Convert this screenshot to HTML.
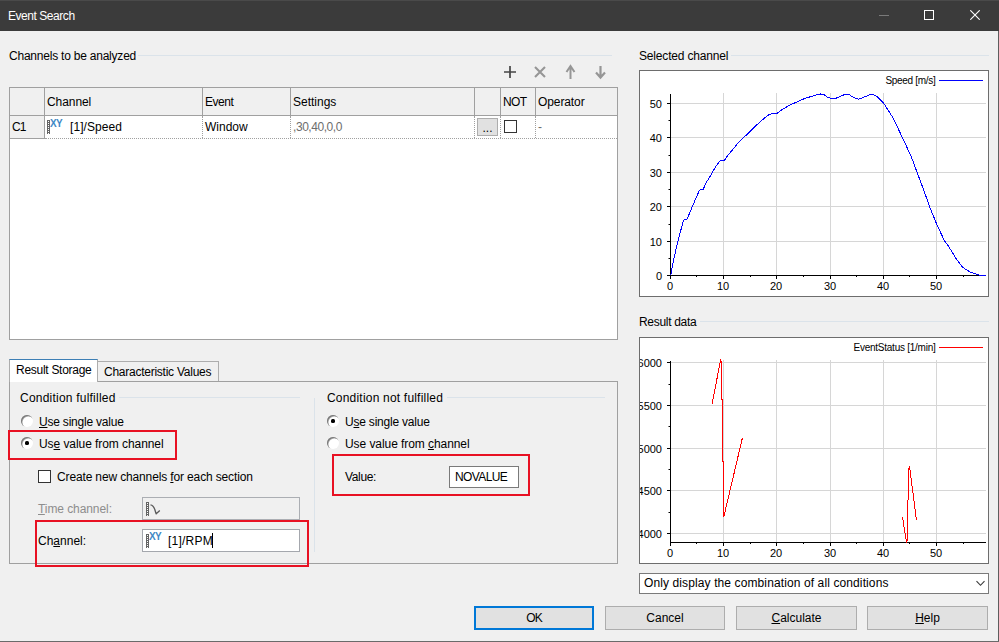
<!DOCTYPE html>
<html><head><meta charset="utf-8">
<style>
*{margin:0;padding:0;box-sizing:border-box}
html,body{width:999px;height:642px;overflow:hidden;background:#f0f0f0;font-family:"Liberation Sans",sans-serif;font-size:12px;color:#000}
.a{position:absolute}
.t{position:absolute;white-space:pre;line-height:14px}
#title{left:0;top:0;width:999px;height:31px;background:#3b3b3b;border-top:1px solid #4a4a4a}
.gl{position:absolute;height:1px;background:#dbe3ea}
.tbl{position:absolute;left:9px;top:87px;width:609px;height:253px;background:#fff;border:1px solid #a0a0a0}
.hd{position:absolute;top:0;height:28px;background:#f0f0f0;border-right:1px solid #a0a0a0;border-bottom:1px solid #a0a0a0}
.vd{position:absolute;width:1px;border-left:1px dotted #a0a0a0}
.btn{position:absolute;background:#e1e1e1;border:1px solid #adadad;text-align:center;line-height:23px}
.red{position:absolute;border:2px solid #e81123}
.rad{position:absolute;width:12px;height:12px;border-radius:50%;background:#fff;box-shadow:inset 1px 1px 0 #7a7a7a,inset 1.5px 1.5px 0 #b8b8b8}
.rad.on::after{content:"";position:absolute;left:4px;top:4px;width:4px;height:4px;border-radius:1.6px;background:#000}
.chk{position:absolute;width:13px;height:13px;border:1px solid #333;background:#fff}
u{text-decoration:underline;text-underline-offset:1px}
.xy{font-size:10px;font-weight:bold;color:#4088c5;letter-spacing:-0.6px;line-height:12px}
</style></head><body>
<div id="title" class="a"></div>
<div class="t" style="left:8px;top:9px;color:#fff;letter-spacing:-0.45px">Event Search</div>
<!-- title controls -->
<div class="a" style="left:879px;top:15px;width:10px;height:1px;background:#7a7a7a"></div>
<div class="a" style="left:924px;top:10px;width:10px;height:10px;border:1px solid #fff"></div>
<svg class="a" style="left:970px;top:10px" width="10" height="10" viewBox="0 0 10 10"><path d="M0.3 0.3L9.7 9.7M9.7 0.3L0.3 9.7" stroke="#fff" stroke-width="1.1"/></svg>
<div class="a" style="left:998px;top:31px;width:1px;height:611px;background:#5e5e5e"></div>
<div class="a" style="left:0;top:641px;width:999px;height:1px;background:#6a6a6a"></div>

<!-- Channels to be analyzed -->
<div class="t" style="left:9px;top:49px;letter-spacing:-0.22px">Channels to be analyzed</div>
<div class="gl" style="left:138px;top:55px;width:474px"></div>
<!-- toolbar -->
<svg class="a" style="left:503px;top:65px" width="14" height="14" viewBox="0 0 14 14"><path d="M7 1V13M1 7H13" stroke="#454545" stroke-width="1.7"/></svg>
<svg class="a" style="left:533px;top:65px" width="14" height="14" viewBox="0 0 14 14"><path d="M2 2L12 12M12 2L2 12" stroke="#969696" stroke-width="2.1"/></svg>
<svg class="a" style="left:564px;top:64px" width="13" height="16" viewBox="0 0 13 16"><path d="M6.5 2V15M2.5 8L6.5 2L10.5 8" stroke="#969696" stroke-width="2" fill="none"/></svg>
<svg class="a" style="left:594px;top:64px" width="13" height="16" viewBox="0 0 13 16"><path d="M6.5 2V14M2 8.5L6.5 13.5L11 8.5" stroke="#969696" stroke-width="2.2" fill="none"/></svg>

<!-- table -->
<div class="tbl">
  <div class="hd" style="left:0;width:35px;height:51px"></div>
  <div class="hd" style="left:35px;width:158px"></div>
  <div class="hd" style="left:193px;width:88px"></div>
  <div class="hd" style="left:281px;width:184px"></div>
  <div class="hd" style="left:465px;width:26px"></div>
  <div class="hd" style="left:491px;width:35px"></div>
  <div class="hd" style="left:526px;width:81px;border-right:none"></div>
  <div class="a" style="left:35px;top:50px;width:572px;border-top:1px dotted #a0a0a0"></div>
  <div class="a" style="left:0;top:27px;width:35px;height:1px;background:#a0a0a0"></div>
  <div class="vd" style="left:192px;top:28px;height:22px"></div>
  <div class="vd" style="left:280px;top:28px;height:22px"></div>
  <div class="vd" style="left:464px;top:28px;height:22px"></div>
  <div class="vd" style="left:490px;top:28px;height:22px"></div>
  <div class="vd" style="left:525px;top:28px;height:22px"></div>
</div>
<div class="t" style="left:47px;top:95px;letter-spacing:-0.07px">Channel</div>
<div class="t" style="left:205px;top:95px;letter-spacing:-0.47px">Event</div>
<div class="t" style="left:293px;top:95px">Settings</div>
<div class="t" style="left:503px;top:95px;letter-spacing:-0.65px">NOT</div>
<div class="t" style="left:538px;top:95px;letter-spacing:-0.1px">Operator</div>
<div class="t" style="left:12px;top:120px;letter-spacing:-0.9px">C1</div>
<svg class="a" style="left:47px;top:120px" width="3" height="14" viewBox="0 0 3 14" shape-rendering="crispEdges"><path d="M0 0H3V14H2V13H1V14H0Z" fill="#646464"/><g fill="#fff"><rect x="1" y="1" width="1" height="1"/><rect x="1" y="3" width="1" height="1"/><rect x="1" y="5" width="1" height="1"/><rect x="1" y="7" width="1" height="1"/><rect x="1" y="9" width="1" height="1"/><rect x="1" y="11" width="1" height="1"/></g></svg>
<div class="t xy" style="left:50px;top:118px">XY</div>
<div class="t" style="left:70px;top:120px;letter-spacing:0.08px">[1]/Speed</div>
<div class="t" style="left:205px;top:120px">Window</div>
<div class="t" style="left:293px;top:120px;color:#6d6d6d;letter-spacing:-0.44px">,30,40,0,0</div>
<div class="btn" style="left:477px;top:118px;width:21px;height:18px;line-height:18px">...</div>
<div class="chk" style="left:504px;top:120px"></div>
<div class="t" style="left:538px;top:120px;color:#6d6d6d">-</div>

<!-- tabs -->
<div class="a" style="left:97px;top:361px;width:122px;height:21px;background:#f0f0f0;border:1px solid #adadad;border-bottom:none"></div>
<div class="t" style="left:104px;top:365px;letter-spacing:-0.25px">Characteristic Values</div>
<div class="a" style="left:9px;top:381px;width:609px;height:183px;border:1px solid #a0a0a0;background:#f0f0f0"></div>
<div class="a" style="left:9px;top:359px;width:89px;height:23px;background:#fff;border:1px solid #adadad;border-top:1px solid #3d7fb5;border-bottom:none"></div>
<div class="t" style="left:16px;top:363px;letter-spacing:-0.28px">Result Storage</div>

<!-- left group -->
<div class="t" style="left:20px;top:391px;letter-spacing:0.22px">Condition fulfilled</div>
<div class="gl" style="left:119px;top:397px;width:181px"></div>
<div class="rad" style="left:21px;top:415px"></div>
<div class="t" style="left:39px;top:415px;letter-spacing:-0.21px"><u>U</u>se single value</div>
<div class="rad on" style="left:21px;top:437px"></div>
<div class="t" style="left:39px;top:437px;letter-spacing:-0.07px">Us<u>e</u> value from channel</div>
<div class="red" style="left:8px;top:430px;width:169px;height:30px"></div>
<div class="chk" style="left:38px;top:470px"></div>
<div class="t" style="left:57px;top:470px;letter-spacing:-0.14px">Create new channels <u>f</u>or each section</div>
<div class="t" style="left:38px;top:502px;color:#8d8d8d;letter-spacing:-0.08px"><u>T</u>ime channel:</div>
<div class="a" style="left:142px;top:497px;width:158px;height:23px;border:1px solid #abaeb3;background:#f0f0f0"></div>
<svg class="a" style="left:146px;top:502px" width="3" height="14" viewBox="0 0 3 14" shape-rendering="crispEdges"><path d="M0 0H3V14H2V13H1V14H0Z" fill="#646464"/><g fill="#fff"><rect x="1" y="1" width="1" height="1"/><rect x="1" y="3" width="1" height="1"/><rect x="1" y="5" width="1" height="1"/><rect x="1" y="7" width="1" height="1"/><rect x="1" y="9" width="1" height="1"/><rect x="1" y="11" width="1" height="1"/></g></svg><svg class="a" style="left:149px;top:502px" width="14" height="16" viewBox="0 0 14 16"><path d="M1.5 2.8C3.5 3 4.8 4.5 5.8 7.5C6.5 10 7 11.5 7.2 11.8L10.8 8.5" stroke="#5a5a5a" fill="none" stroke-width="1.3"/></svg>
<div class="red" style="left:35px;top:520px;width:274px;height:47px"></div>
<div class="t" style="left:38px;top:534px">Ch<u>a</u>nnel:</div>
<div class="a" style="left:142px;top:529px;width:158px;height:23px;border:1px solid #a4a7ad;background:#fff"></div>
<svg class="a" style="left:146px;top:534px" width="3" height="14" viewBox="0 0 3 14" shape-rendering="crispEdges"><path d="M0 0H3V14H2V13H1V14H0Z" fill="#646464"/><g fill="#fff"><rect x="1" y="1" width="1" height="1"/><rect x="1" y="3" width="1" height="1"/><rect x="1" y="5" width="1" height="1"/><rect x="1" y="7" width="1" height="1"/><rect x="1" y="9" width="1" height="1"/><rect x="1" y="11" width="1" height="1"/></g></svg>
<div class="t xy" style="left:149px;top:531px">XY</div>
<div class="t" style="left:168px;top:534px;letter-spacing:0.23px">[1]/RPM</div>
<div class="a" style="left:212px;top:533px;width:1px;height:15px;background:#000"></div>

<!-- right group -->
<div class="t" style="left:327px;top:391px;letter-spacing:0.2px">Condition not fulfilled</div>
<div class="gl" style="left:447px;top:397px;width:158px"></div>
<div class="a" style="left:314px;top:398px;width:1px;height:154px;background:#dbe3ea"></div>
<div class="rad on" style="left:327px;top:415px"></div>
<div class="t" style="left:345px;top:415px;letter-spacing:-0.21px">U<u>s</u>e single value</div>
<div class="rad" style="left:327px;top:437px"></div>
<div class="t" style="left:345px;top:437px;letter-spacing:-0.07px">Use value from <u>c</u>hannel</div>
<div class="red" style="left:332px;top:454px;width:198px;height:42px"></div>
<div class="t" style="left:345px;top:470px;letter-spacing:-0.35px">Value:</div>
<div class="a" style="left:449px;top:466px;width:70px;height:22px;border:1px solid #7a7a7a;background:#fff"></div>
<div class="t" style="left:455px;top:470px;letter-spacing:-0.62px">NOVALUE</div>

<!-- right side -->
<div class="t" style="left:639px;top:49px;letter-spacing:-0.17px">Selected channel</div>
<div class="gl" style="left:731px;top:55px;width:258px"></div>
<div class="t" style="left:639px;top:315px;letter-spacing:-0.3px">Result data</div>
<div class="gl" style="left:700px;top:321px;width:289px"></div>

<svg class="a" style="left:639px;top:70px" width="350" height="227" viewBox="639 70 350 227" id="ch1"><g style="font-family:'Liberation Sans',sans-serif;font-size:11px"><rect x="639.5" y="70.5" width="349" height="226" fill="#fff" stroke="#6d6d6d"/>
<line x1="723.5" y1="93" x2="723.5" y2="275" stroke="#d6d6d6"/>
<line x1="776.5" y1="93" x2="776.5" y2="275" stroke="#d6d6d6"/>
<line x1="830.5" y1="93" x2="830.5" y2="275" stroke="#d6d6d6"/>
<line x1="883.5" y1="93" x2="883.5" y2="275" stroke="#d6d6d6"/>
<line x1="936.5" y1="93" x2="936.5" y2="275" stroke="#d6d6d6"/>
<line x1="671" y1="241.5" x2="986" y2="241.5" stroke="#d6d6d6"/>
<line x1="671" y1="206.5" x2="986" y2="206.5" stroke="#d6d6d6"/>
<line x1="671" y1="172.5" x2="986" y2="172.5" stroke="#d6d6d6"/>
<line x1="671" y1="137.5" x2="986" y2="137.5" stroke="#d6d6d6"/>
<line x1="671" y1="103.5" x2="986" y2="103.5" stroke="#d6d6d6"/>
<line x1="670.5" y1="94" x2="670.5" y2="279" stroke="#000"/>
<line x1="667" y1="275.5" x2="986" y2="275.5" stroke="#000"/>
<line x1="670.5" y1="275.5" x2="670.5" y2="279" stroke="#000"/>
<line x1="667" y1="275.5" x2="670.5" y2="275.5" stroke="#000"/>
<line x1="723.5" y1="275.5" x2="723.5" y2="279" stroke="#000"/>
<line x1="667" y1="241.5" x2="670.5" y2="241.5" stroke="#000"/>
<line x1="776.5" y1="275.5" x2="776.5" y2="279" stroke="#000"/>
<line x1="667" y1="206.5" x2="670.5" y2="206.5" stroke="#000"/>
<line x1="830.5" y1="275.5" x2="830.5" y2="279" stroke="#000"/>
<line x1="667" y1="172.5" x2="670.5" y2="172.5" stroke="#000"/>
<line x1="883.5" y1="275.5" x2="883.5" y2="279" stroke="#000"/>
<line x1="667" y1="137.5" x2="670.5" y2="137.5" stroke="#000"/>
<line x1="936.5" y1="275.5" x2="936.5" y2="279" stroke="#000"/>
<line x1="667" y1="103.5" x2="670.5" y2="103.5" stroke="#000"/>
<line x1="696.5" y1="275.5" x2="696.5" y2="277" stroke="#000"/>
<line x1="668.5" y1="258.5" x2="670.5" y2="258.5" stroke="#000"/>
<line x1="750.5" y1="275.5" x2="750.5" y2="277" stroke="#000"/>
<line x1="668.5" y1="224.5" x2="670.5" y2="224.5" stroke="#000"/>
<line x1="803.5" y1="275.5" x2="803.5" y2="277" stroke="#000"/>
<line x1="668.5" y1="189.5" x2="670.5" y2="189.5" stroke="#000"/>
<line x1="856.5" y1="275.5" x2="856.5" y2="277" stroke="#000"/>
<line x1="668.5" y1="155.5" x2="670.5" y2="155.5" stroke="#000"/>
<line x1="909.5" y1="275.5" x2="909.5" y2="277" stroke="#000"/>
<line x1="668.5" y1="120.5" x2="670.5" y2="120.5" stroke="#000"/>
<line x1="963.5" y1="275.5" x2="963.5" y2="277" stroke="#000"/>
<text x="662" y="279.5" text-anchor="end">0</text>
<text x="670.0" y="289.5" text-anchor="middle">0</text>
<text x="662" y="245.5" text-anchor="end">10</text>
<text x="723.0" y="289.5" text-anchor="middle">10</text>
<text x="662" y="210.5" text-anchor="end">20</text>
<text x="776.0" y="289.5" text-anchor="middle">20</text>
<text x="662" y="176.5" text-anchor="end">30</text>
<text x="830.0" y="289.5" text-anchor="middle">30</text>
<text x="662" y="141.5" text-anchor="end">40</text>
<text x="883.0" y="289.5" text-anchor="middle">40</text>
<text x="662" y="107.5" text-anchor="end">50</text>
<text x="936.0" y="289.5" text-anchor="middle">50</text>
<text x="935.5" y="84.2" text-anchor="end" style="font-size:10px;letter-spacing:-0.3px">Speed [m/s]</text>
<line x1="939" y1="80.5" x2="983" y2="80.5" stroke="#0000ff"/>
<polyline fill="none" stroke="#0000ff" stroke-width="1" shape-rendering="crispEdges" points="670.7,275.2 674,258 678.1,240.5 683.3,220.8 684.6,219.2 687.1,219.2 693.6,203.6 699.4,190.5 700.5,189.7 703,189.7 706,183 711.5,174 716,166 720.3,160.6 724.3,160.3 729,154 737,144.3 745,136.3 756,125.5 767.6,115.4 772.4,113.2 777.2,113.2 783,109 790,105 804.4,98.6 812,96.2 818.8,94.3 820.6,94 824.3,94.7 827.5,97.5 833.7,99 838,97.5 845,94.3 849.3,94.7 852.4,96.8 858.6,99.3 864.8,96.8 871.7,94 877.3,96.8 883.5,103 893.5,118.6 902.2,137.3 911,156 918.1,175 923.7,190 929.3,205.8 936.8,224.5 944.3,240.4 948.9,246.9 956.4,259 962.9,267.5 970.4,272.1 977,274.4 980,275.3 986,275.3"/></g></svg>
<svg class="a" style="left:639px;top:337px" width="350" height="227" viewBox="639 337 350 227" id="ch2"><g style="font-family:'Liberation Sans',sans-serif;font-size:11px"><rect x="639.5" y="337.5" width="349" height="226" fill="#fff" stroke="#6d6d6d"/>
<clipPath id="cp2"><rect x="640" y="338" width="348" height="225"/></clipPath>
<line x1="723.5" y1="360" x2="723.5" y2="542" stroke="#d6d6d6"/>
<line x1="776.5" y1="360" x2="776.5" y2="542" stroke="#d6d6d6"/>
<line x1="830.5" y1="360" x2="830.5" y2="542" stroke="#d6d6d6"/>
<line x1="883.5" y1="360" x2="883.5" y2="542" stroke="#d6d6d6"/>
<line x1="936.5" y1="360" x2="936.5" y2="542" stroke="#d6d6d6"/>
<line x1="671" y1="533.5" x2="986" y2="533.5" stroke="#d6d6d6"/>
<line x1="671" y1="490.5" x2="986" y2="490.5" stroke="#d6d6d6"/>
<line x1="671" y1="448.5" x2="986" y2="448.5" stroke="#d6d6d6"/>
<line x1="671" y1="405.5" x2="986" y2="405.5" stroke="#d6d6d6"/>
<line x1="671" y1="362.5" x2="986" y2="362.5" stroke="#d6d6d6"/>
<line x1="670.5" y1="361" x2="670.5" y2="542.5" stroke="#000"/>
<line x1="670" y1="542.5" x2="986" y2="542.5" stroke="#000"/>
<line x1="670.5" y1="542.5" x2="670.5" y2="546" stroke="#000"/>
<line x1="723.5" y1="542.5" x2="723.5" y2="546" stroke="#000"/>
<line x1="776.5" y1="542.5" x2="776.5" y2="546" stroke="#000"/>
<line x1="830.5" y1="542.5" x2="830.5" y2="546" stroke="#000"/>
<line x1="883.5" y1="542.5" x2="883.5" y2="546" stroke="#000"/>
<line x1="936.5" y1="542.5" x2="936.5" y2="546" stroke="#000"/>
<line x1="696.5" y1="542.5" x2="696.5" y2="544" stroke="#000"/>
<line x1="750.5" y1="542.5" x2="750.5" y2="544" stroke="#000"/>
<line x1="803.5" y1="542.5" x2="803.5" y2="544" stroke="#000"/>
<line x1="856.5" y1="542.5" x2="856.5" y2="544" stroke="#000"/>
<line x1="909.5" y1="542.5" x2="909.5" y2="544" stroke="#000"/>
<line x1="963.5" y1="542.5" x2="963.5" y2="544" stroke="#000"/>
<line x1="667" y1="533.5" x2="670.5" y2="533.5" stroke="#000"/>
<line x1="667" y1="490.5" x2="670.5" y2="490.5" stroke="#000"/>
<line x1="667" y1="448.5" x2="670.5" y2="448.5" stroke="#000"/>
<line x1="667" y1="405.5" x2="670.5" y2="405.5" stroke="#000"/>
<line x1="667" y1="362.5" x2="670.5" y2="362.5" stroke="#000"/>
<line x1="668.5" y1="512.5" x2="670.5" y2="512.5" stroke="#000"/>
<line x1="668.5" y1="469.5" x2="670.5" y2="469.5" stroke="#000"/>
<line x1="668.5" y1="426.5" x2="670.5" y2="426.5" stroke="#000"/>
<line x1="668.5" y1="384.5" x2="670.5" y2="384.5" stroke="#000"/>
<g clip-path="url(#cp2)">
<text x="662" y="537.5" text-anchor="end">4000</text>
<text x="662" y="494.5" text-anchor="end">4500</text>
<text x="662" y="452.5" text-anchor="end">5000</text>
<text x="662" y="409.5" text-anchor="end">5500</text>
<text x="662" y="366.5" text-anchor="end">6000</text>
</g>
<text x="670.0" y="557" text-anchor="middle">0</text>
<text x="723.0" y="557" text-anchor="middle">10</text>
<text x="776.0" y="557" text-anchor="middle">20</text>
<text x="830.0" y="557" text-anchor="middle">30</text>
<text x="883.0" y="557" text-anchor="middle">40</text>
<text x="936.0" y="557" text-anchor="middle">50</text>
<text x="935.5" y="351.2" text-anchor="end" style="font-size:10px;letter-spacing:-0.25px">EventStatus [1/min]</text>
<line x1="939" y1="347.5" x2="983" y2="347.5" stroke="#ff0000"/>
<polyline fill="none" stroke="#ff0000" stroke-width="1" shape-rendering="crispEdges" points="712.1,403.6 720.6,360.2 721.5,362 721.6,399 722.5,400 722.5,461 723.7,462.3 723.7,517.2 742.4,437.9"/>
<polyline fill="none" stroke="#ff0000" stroke-width="1" shape-rendering="crispEdges" points="902.5,517 906.5,542.5 907.5,539 907.5,500.5 908.5,499.5 908.5,470 909.5,466 916.5,520.5"/></g></svg>

<!-- dropdown -->
<div class="a" style="left:639px;top:573px;width:350px;height:21px;border:1px solid #7a7a7a;background:#fff"></div>
<div class="t" style="left:644px;top:576px;letter-spacing:0.11px">Only display the combination of all conditions</div>
<svg class="a" style="left:976px;top:580px" width="10" height="8" viewBox="0 0 10 8"><path d="M0.5 1.2L4.5 5.3L8.5 1.2" stroke="#3a3a3a" fill="none" stroke-width="1.15"/></svg>

<!-- buttons -->
<div class="btn" style="left:474px;top:606px;width:120px;height:24px;border:2px solid #0078d7;line-height:20px;letter-spacing:-1px">OK</div>
<div class="btn" style="left:605px;top:606px;width:120px;height:24px">Cancel</div>
<div class="btn" style="left:736px;top:606px;width:121px;height:24px"><u>C</u>alculate</div>
<div class="btn" style="left:867px;top:606px;width:121px;height:24px"><u>H</u>elp</div>
</body></html>
